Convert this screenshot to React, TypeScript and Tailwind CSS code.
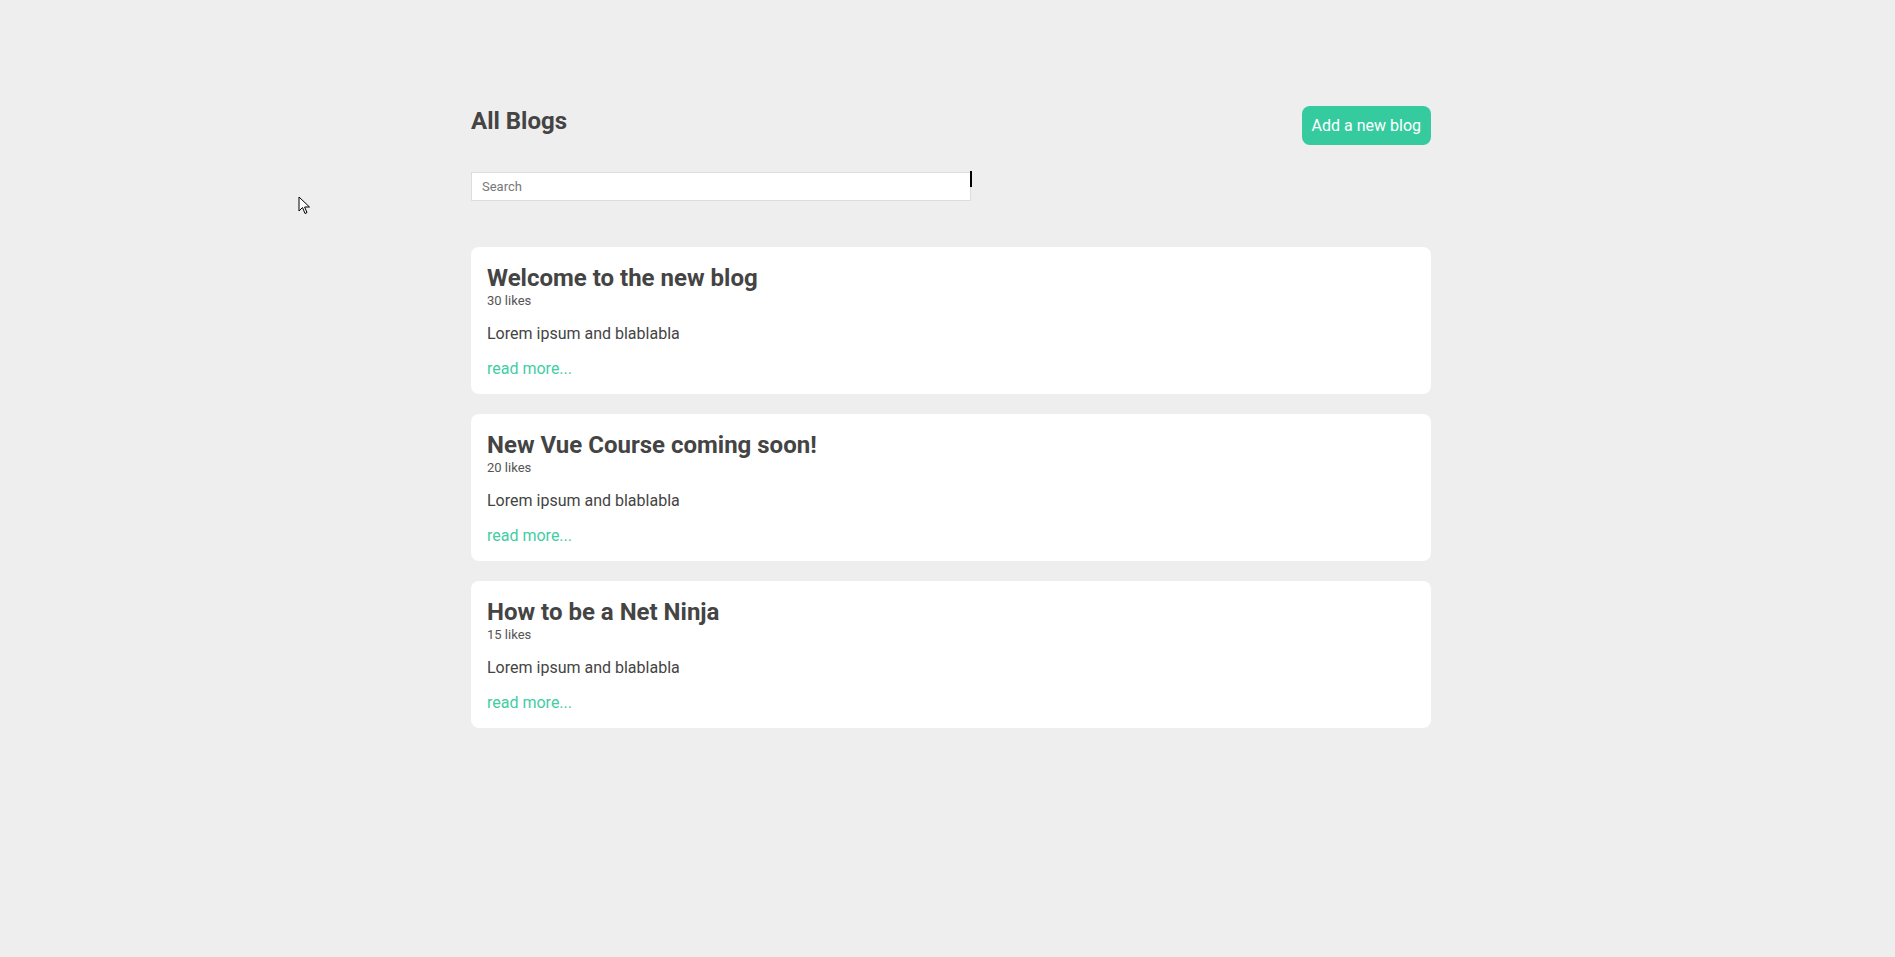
import React from "react";

type Blog = { id: number; title: string; likes: number; body: string };

const blogs: Blog[] = [
    { id: 1, title: "Welcome to the new blog", likes: 30, body: "Lorem ipsum and blablabla" },
    { id: 2, title: "New Vue Course coming soon!", likes: 20, body: "Lorem ipsum and blablabla" },
    { id: 3, title: "How to be a Net Ninja", likes: 15, body: "Lorem ipsum and blablabla" },
];

const BlogCard = ({ blog }: { blog: Blog }) => (
    <div className="bg-white rounded-[8px] px-4 pt-[17px] pb-4">
        <h3 className="text-[24px] font-bold leading-[28px] text-[#444]">{blog.title}</h3>
        <div className="text-[13px] leading-[15px] text-[#555] mt-[1px]">{blog.likes} likes</div>
        <p className="text-[16px] leading-[19px] text-[#444] mt-4">{blog.body}</p>
        <a href="#" className="block text-[16px] leading-[19px] text-[#42cda3] mt-4">
            read more...
        </a>
    </div>
);

export default function App() {
    return (
        <div
            className="min-h-screen bg-[#eeeeee] relative"
            style={{ fontFamily: "Roboto, 'Liberation Sans', sans-serif" }}
        >
            <div className="w-[960px] ml-[471px] pt-[106px]">
                {/* Header */}
                <div className="flex justify-between items-start">
                    <h2 className="text-[24px] font-bold leading-[28px] text-[#444] mt-[1px]">All Blogs</h2>
                    <button className="h-[39px] px-[10px] rounded-[8px] bg-[#36cb9f] text-white text-[16px]">
                        Add a new blog
                    </button>
                </div>

                {/* Search */}
                <input
                    type="text"
                    placeholder="Search"
                    className="mt-[27px] w-[500px] h-[29px] bg-white border border-[#dddddd] px-[10px] text-[13px] text-[#444] placeholder:text-[#777] outline-none"
                />

                {/* Blog list */}
                <div className="mt-[46px] flex flex-col gap-5">
                    {blogs.map((b) => (
                        <BlogCard key={b.id} blog={b} />
                    ))}
                </div>
            </div>

            {/* text caret / I-beam overlay */}
            <div className="absolute left-[970px] top-[171px] w-[2px] h-[16px] bg-black" />

            {/* mouse pointer */}
            <svg className="absolute left-[298px] top-[196px]" width="13" height="20" viewBox="0 0 13 20">
                <path d="M1 1 L1 15 L4.5 11.5 L7 17.5 L9 16.6 L6.6 11 L11.5 11 Z" fill="#fff" stroke="#000" strokeWidth="1" strokeLinejoin="miter" />
            </svg>
        </div>
    );
}
